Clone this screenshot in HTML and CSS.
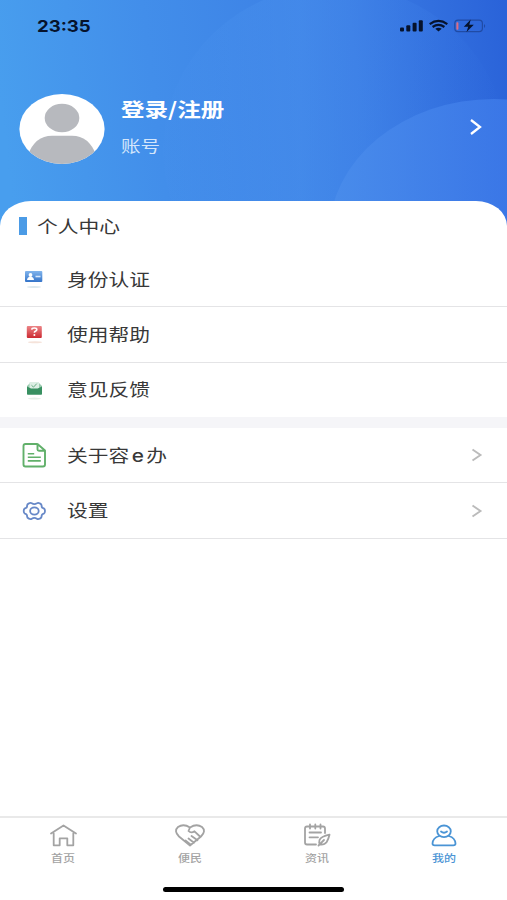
FILE: index.html
```html
<!DOCTYPE html>
<html lang="zh-CN">
<head>
<meta charset="utf-8">
<title>我的</title>
<link rel="stylesheet" href="styles.css">
</head>
<body>
<div class="app">
  <header class="hero">
    <svg class="hero-bg" viewBox="0 0 507 240" preserveAspectRatio="none">
      <defs>
        <linearGradient id="bg" gradientUnits="userSpaceOnUse" x1="0" y1="100" x2="507" y2="40">
          <stop offset="0" stop-color="#489eee"/><stop offset=".3" stop-color="#428eea"/><stop offset=".7" stop-color="#3b7de4"/><stop offset="1" stop-color="#2a63d9"/>
        </linearGradient>
        <linearGradient id="big" x1="0" y1="0" x2="1" y2="0">
          <stop offset="0" stop-color="#4a92ee" stop-opacity=".1"/><stop offset=".4" stop-color="#4a92ee" stop-opacity=".45"/><stop offset="1" stop-color="#3c7cea" stop-opacity="0"/>
        </linearGradient>
        <linearGradient id="small" x1="0" y1="0" x2="1" y2="0">
          <stop offset="0" stop-color="#4a8deb"/><stop offset=".5" stop-color="#3e7be9"/><stop offset="1" stop-color="#356fe8"/>
        </linearGradient>
      </defs>
      <rect width="507" height="240" fill="url(#bg)"/>
      <ellipse cx="335" cy="150" rx="172" ry="165" fill="url(#big)"/>
      <ellipse cx="494" cy="235" rx="165" ry="136" fill="url(#small)" opacity=".85"/>
    </svg>
    <div class="status">
      <span class="clock">23:35</span>
      <svg class="signals" width="88" height="16" viewBox="0 0 88 16">
        <g fill="#06132d">
          <rect x="0" y="9.5" width="4" height="4" rx="1"/><rect x="6.3" y="7.3" width="4" height="6.2" rx="1"/><rect x="12.6" y="4.7" width="4" height="8.8" rx="1"/><rect x="18.8" y="2.2" width="4" height="11.3" rx="1"/>
          <path d="M35.3 10.8q3.2-2.2 6.4 0L38.5 13.6z"/>
        </g>
        <g fill="none" stroke="#06132d" stroke-width="2.2">
          <path d="M29.7 6.1q8.800-6.500 17.600 0M32.600 9q5.900-4.200 11.800 0"/>
        </g>
        <rect x="54.8" y="2.2" width="27.6" height="11.4" rx="3.3" fill="none" stroke="#204ba5" stroke-width="1.2"/>
        <path d="M84 6v4q2.400-2 0-4z" fill="#204ba5"/>
        <rect x="56.4" y="4.2" width="2" height="7.6" rx=".8" fill="#df6d83"/>
        <path d="M70.700 1.500L63.800 8.700h4.400L66.500 14l7.300-7.300h-4.500z" fill="#06132d"/>
      </svg>
    </div>
    <div class="profile">
      <svg class="avatar" width="86" height="72" viewBox="0 0 86 72">
        <defs><clipPath id="face"><ellipse cx="43" cy="36" rx="42.600" ry="35"/></clipPath></defs>
        <ellipse cx="43" cy="36" rx="42.600" ry="35" fill="#fff"/>
        <g clip-path="url(#face)" fill="#b7b9be"><ellipse cx="43" cy="25" rx="17.300" ry="14.300"/><path d="M9 62Q16 42.800 33 42.800H53Q70 42.800 77 62V74H9z"/></g>
      </svg>
      <div class="who"><span class="login wide">登录/注册</span><span class="account wide">账号</span></div>
      <svg class="go" width="14" height="18" viewBox="0 0 14 18"><path d="M2 2l9 7-9 7" fill="none" stroke="#fff" stroke-width="2.300"/></svg>
    </div>
  </header>
  <main class="sheet">
    <h2 class="heading"><i class="mark"></i><span class="wide">个人中心</span></h2>
    <section class="group">
      <div class="row">
        <svg class="icon" width="30" height="30" viewBox="0 0 30 30"><defs><linearGradient id="blue" x2="0" y2="1"><stop stop-color="#82b5ed"/><stop offset="1" stop-color="#3474c9"/></linearGradient></defs><rect x="6" y="7" width="17.300" height="11" rx="1" fill="url(#blue)"/><circle cx="11.500" cy="11" r="1.900" fill="#fff"/><path d="M8 16q.500-3.300 3.500-3.300T15 16z" fill="#fff"/><path d="M16.500 12.500h5" stroke="#d7e8fc" stroke-width="1.600"/><ellipse cx="15" cy="23" rx="7" ry="1" fill="#dde9ee"/></svg>
        <span class="wide">身份认证</span>
      </div>
      <div class="row">
        <svg class="icon" width="30" height="30" viewBox="0 0 30 30"><defs><linearGradient id="red" x2="0" y2="1"><stop stop-color="#ec8587"/><stop offset="1" stop-color="#cc2931"/></linearGradient></defs><rect x="7.800" y="7" width="15" height="12" rx="1" fill="url(#red)"/><path d="M12.700 10.700q.200-1.700 2.600-1.700 2.500 0 2.500 1.600 0 1.200-1.400 1.700-1 .400-1 1.400" fill="none" stroke="#fff" stroke-width="1.600"/><circle cx="15.400" cy="16" r="1" fill="#fff"/><ellipse cx="16" cy="23.300" rx="7" ry="1" fill="#f5e3da"/></svg>
        <span class="wide">使用帮助</span>
      </div>
      <div class="row">
        <svg class="icon" width="30" height="30" viewBox="0 0 30 30"><path d="M8 11l3-3h9l3 3v2H8z" fill="#9bcbb0"/><path d="M10.500 7h9.500v8h-9.500z" fill="#dceee4"/><path d="M12.500 10.300l2 1.800 3.300-3.500" fill="none" stroke="#69ad84" stroke-width="1"/><path d="M8 11.500l4 2h6.700l4.300-2V19q0 .800-.800.800H8.800Q8 19.800 8 19z" fill="#389061"/><ellipse cx="15.400" cy="23.600" rx="6.500" ry="1" fill="#e5efe8"/></svg>
        <span class="wide">意见反馈</span>
      </div>
    </section>
    <section class="group more">
      <div class="row">
        <svg class="icon" width="30" height="30" viewBox="0 0 30 30" fill="none" stroke="#61b06a" stroke-width="1.900"><path d="M18.500 4H6.500Q4.500 4 4.500 6V24.500Q4.500 26.500 6.500 26.500H24Q26 26.500 26 24.500V10.500L18.500 4V9.500Q18.500 10.700 20 10.700H26" stroke-linejoin="round"/><path d="M8.800 13.800h6.400M8.800 17.300h13M8.800 20.900h13" stroke-width="1.600"/></svg>
        <span class="wide">关于容<b class="latin">e</b>办</span>
        <svg class="chev" width="12" height="14" viewBox="0 0 12 14"><path d="M1.500 1.500l8 5.500-8 5.500" fill="none" stroke="#bbb" stroke-width="1.900"/></svg>
      </div>
      <div class="row">
        <svg class="icon" width="30" height="30" viewBox="0 0 30 30" fill="none" stroke="#6788c7" stroke-width="1.800" stroke-linejoin="round"><path d="M9.800 7.400Q11.500 6.300 12.800 7.200Q15.300 8.900 17.900 7.200Q19.200 6.300 20.900 7.400Q22.800 8.400 22.600 9.900Q22.600 11.800 24.800 12.400Q26 13 26 15Q26 17 24.800 17.600Q22.600 18.200 22.600 20.100Q22.800 21.600 20.900 22.600Q19.200 23.700 17.900 22.800Q15.300 21.100 12.800 22.800Q11.500 23.700 9.800 22.600Q7.900 21.600 8.100 20.100Q8.100 18.200 5.900 17.600Q4.700 17 4.700 15Q4.700 13 5.900 12.400Q8.100 11.800 8.100 9.900Q7.900 8.400 9.800 7.400Z"/><ellipse cx="15.400" cy="15" rx="4.300" ry="3.600"/></svg>
        <span class="wide">设置</span>
        <svg class="chev" width="12" height="14" viewBox="0 0 12 14"><path d="M1.500 1.500l8 5.500-8 5.500" fill="none" stroke="#bbb" stroke-width="1.900"/></svg>
      </div>
    </section>
  </main>
  <nav class="tabs">
    <div class="tab"><svg width="32" height="26" viewBox="0 0 32 26"><path d="M4 11.500L16.500 3.500l12.500 8M6.700 11.500V23.300h6V16.300h7.600v7h6V11.500"/></svg><span>首页</span></div>
    <div class="tab"><svg width="32" height="26" viewBox="0 0 32 26"><path d="M16 23.500L5 14.500Q-.500 9 4 5Q9.500 1.300 16 5.500Q22.500 1.300 28 5Q32.500 9 27 14.500L16 23.500zM16 5.500l-1.500 3.500q2.500 2.700 6 .300l6 5.700M17.500 14l6 4.300M14.500 16.500l5.500 4.200M11.500 18.500l5 4"/></svg><span>便民</span></div>
    <div class="tab"><svg width="32" height="26" viewBox="0 0 32 26"><path d="M24 11V6.500q0-2-2-2H6Q4 4.500 4 6.500V20.500q0 2 2 2H15M9 2.500v4M14.300 2.500v4M19.500 2.500v4M8.500 10.500h11.500M8.500 15.300h8.500M28.500 12.700Q20 14.500 18.500 18 17.700 20.500 19 22.500 23.500 23 25.700 20 27.500 17 28.500 12.700zM17.500 23.500l5.500-5.500"/></svg><span>资讯</span></div>
    <div class="tab active"><svg width="32" height="26" viewBox="0 0 32 26"><ellipse cx="16" cy="9.300" rx="6.800" ry="5.800"/><path d="M13 9.500q3 2.500 6 0M11.200 14Q4.700 16 4.500 21.500q0 1.800 2.200 1.800H25.300q2.200 0 2.200-1.800Q27.300 16 20.800 14"/></svg><span>我的</span></div>
  </nav>
  <footer class="home"><i class="home-bar"></i></footer>
</div>
</body>
</html>
```

FILE: styles.css
```css
* { box-sizing: border-box; }
body {
  margin: 0;
  background: #fff;
  color: #383838;
  font-family: "Noto Sans CJK SC", sans-serif;
  overflow: hidden;
}
.app {
  display: flex;
  flex-direction: column;
  width: 507px;
  height: 900px;
}
.hero {
  position: relative;
  height: 201px;
  flex: none;
}
.hero-bg {
  position: absolute;
  top: 0;
  left: 0;
  width: 507px;
  height: 240px;
}
.status {
  position: relative;
  display: flex;
  justify-content: space-between;
  align-items: center;
  height: 51px;
  padding: 0 19px 0 37px;
}
.clock {
  font: bold 16px/20px Inter, sans-serif;
  color: #06132d;
  transform: scaleX(1.16);
  transform-origin: left;
}
.profile {
  position: relative;
  display: flex;
  align-items: center;
  height: 72px;
  margin-top: 42px;
  padding: 0 24px 0 19px;
}
.who {
  display: flex;
  flex-direction: column;
  gap: 9px;
  margin: -6px 0 0 16px;
  color: #fff;
}
.wide {
  transform: scaleX(1.22);
  transform-origin: left;
  white-space: nowrap;
}
.login {
  font-size: 19.300px;
  line-height: 28px;
  font-weight: 700;
}
.account {
  font-size: 16px;
  line-height: 26px;
  color: #d3e6fb;
}
.go { margin: -4px 0 0 auto; }
.sheet {
  position: relative;
  flex: 1;
  background: #fff;
  border-radius: 31px 31px 0 0 / 25px 25px 0 0;
}
.heading {
  display: flex;
  align-items: center;
  height: 50px;
  margin: 0;
  padding-left: 19px;
  font-size: 17px;
  font-weight: 400;
}
.heading .wide, .row .wide { margin: -2px 0 0 -1px; }
.mark {
  width: 8px;
  height: 18px;
  margin-right: 11px;
  background: #4b9be6;
}
.row {
  display: flex;
  align-items: center;
  height: 55.300px;
  padding: 0 24px 0 19px;
  border-bottom: 1px solid #e4e4e6;
  font-size: 17px;
}
.sheet .heading + .group { padding-top: 1px; }
.group:not(.more) .row:last-child { border-bottom: 0; height: 54.500px; }
.icon { margin-right: 19px; }
.more { border-top: 11px solid #f5f5f8; }
.chev { margin-left: auto; }
.latin {
  margin: 0 2px;
  font: 500 17px Inter, sans-serif;
}
.tabs {
  display: flex;
  height: 57px;
  border-top: 2px solid #e9e9e9;
}
.tab {
  flex: 1;
  display: flex;
  flex-direction: column;
  align-items: center;
  padding-top: 4px;
  color: #a3a3a3;
}
.tab svg {
  fill: none;
  stroke: currentColor;
  stroke-width: 1.800;
  stroke-linecap: round;
  stroke-linejoin: round;
}
.tab span {
  margin-top: 3px;
  font-size: 10px;
  line-height: 14px;
  font-weight: 500;
  transform: scaleX(1.2);
}
.tab.active { color: #4a94d5; }
.home {
  display: flex;
  justify-content: center;
  height: 27px;
  padding-top: 14px;
}
.home-bar {
  width: 181px;
  height: 5px;
  border-radius: 3px;
  background: #000;
}
```
